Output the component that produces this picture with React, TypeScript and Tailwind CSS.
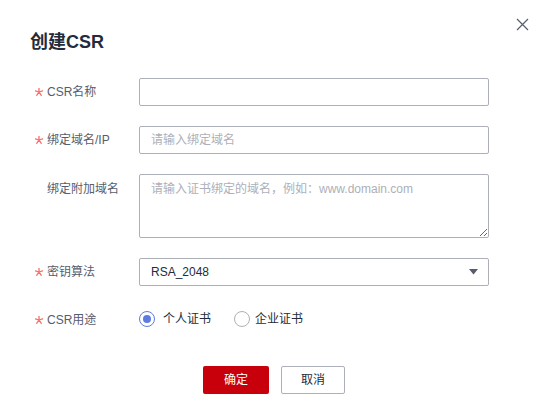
import React from 'react';

const font = { fontFamily: '"Liberation Sans", "Noto Sans CJK SC", sans-serif' };

function Label({ text, required = true, top = false }: { text: string; required?: boolean; top?: boolean }) {
  return (
    <div className={`w-[104px] shrink-0 flex text-[12px] text-[#575d6c] ${top ? 'items-start pt-[6px]' : 'items-center'}`}>
      <span className="w-[12px] h-[12px] flex items-center">
        {required && (
          <svg width="8" height="8" viewBox="0 0 8 8">
            <path
              d="M4 0.3 L4 4 M4 4 L7.6 2.9 M4 4 L6.3 7.3 M4 4 L1.7 7.3 M4 4 L0.4 2.9"
              stroke="#f66f6a"
              strokeWidth="1.3"
              strokeLinecap="round"
              fill="none"
            />
          </svg>
        )}
      </span>
      <span>{text}</span>
    </div>
  );
}

export default function App() {
  return (
    <div className="relative w-[538px] h-[419px] bg-white" style={font}>
      <button className="absolute top-[18px] right-[9px] w-[13px] h-[13px]">
        <svg viewBox="0 0 13 13" width="13" height="13">
          <path d="M1 1 L12 12 M12 1 L1 12" stroke="#575d6c" strokeWidth="1.2" fill="none" />
        </svg>
      </button>

      <div className="pt-[29px] pl-[30px]">
        <h2 className="text-[18px] leading-[26px] font-bold text-[#252b3a]">创建CSR</h2>

        <div className="mt-[23px] pl-[5px] flex flex-col gap-5">
          <div className="flex h-[28px]">
            <Label text="CSR名称" />
            <input className="w-[350px] h-[28px] border border-[#adb0b8] rounded-[2px] px-[11px] text-[12px] outline-none" />
          </div>

          <div className="flex h-[28px]">
            <Label text="绑定域名/IP" />
            <input
              placeholder="请输入绑定域名"
              className="w-[350px] h-[28px] border border-[#adb0b8] rounded-[2px] px-[11px] text-[12px] outline-none placeholder:text-[#adb0b8]"
            />
          </div>

          <div className="flex">
            <Label text="绑定附加域名" required={false} top />
            <textarea
              placeholder="请输入证书绑定的域名，例如：www.domain.com"
              className="w-[350px] h-[64px] border border-[#adb0b8] rounded-[2px] px-[11px] py-[5px] text-[12px] leading-[18px] outline-none placeholder:text-[#adb0b8]"
            />
          </div>

          <div className="flex h-[28px]">
            <Label text="密钥算法" />
            <div className="w-[350px] h-[28px] border border-[#adb0b8] rounded-[2px] pl-[11px] pr-[10px] flex items-center justify-between text-[12px] text-[#252b3a]">
              <span>RSA_2048</span>
              <svg width="9" height="6" viewBox="0 0 9 6">
                <path d="M0 0 H9 L4.5 5.5 Z" fill="#575d6c" />
              </svg>
            </div>
          </div>

          <div className="flex h-[28px]">
            <Label text="CSR用途" />
            <div className="flex items-center text-[12px] text-[#252b3a] -mt-[3px]">
              <span className="w-[16px] h-[16px] rounded-full border border-[#5e7ce0] flex items-center justify-center">
                <span className="w-[8px] h-[8px] rounded-full bg-[#5e7ce0]" />
              </span>
              <span className="ml-[8px]">个人证书</span>
              <span className="ml-[23px] w-[16px] h-[16px] rounded-full border border-[#adb0b8]" />
              <span className="ml-[5px]">企业证书</span>
            </div>
          </div>
        </div>

        <div className="mt-[32px] pl-[173px] flex gap-3">
          <button className="w-[66px] h-[28px] rounded-[2px] bg-[#c7000b] text-white text-[12px]">确定</button>
          <button className="w-[64px] h-[28px] rounded-[2px] border border-[#adb0b8] bg-white text-[#252b3a] text-[12px]">取消</button>
        </div>
      </div>
    </div>
  );
}
